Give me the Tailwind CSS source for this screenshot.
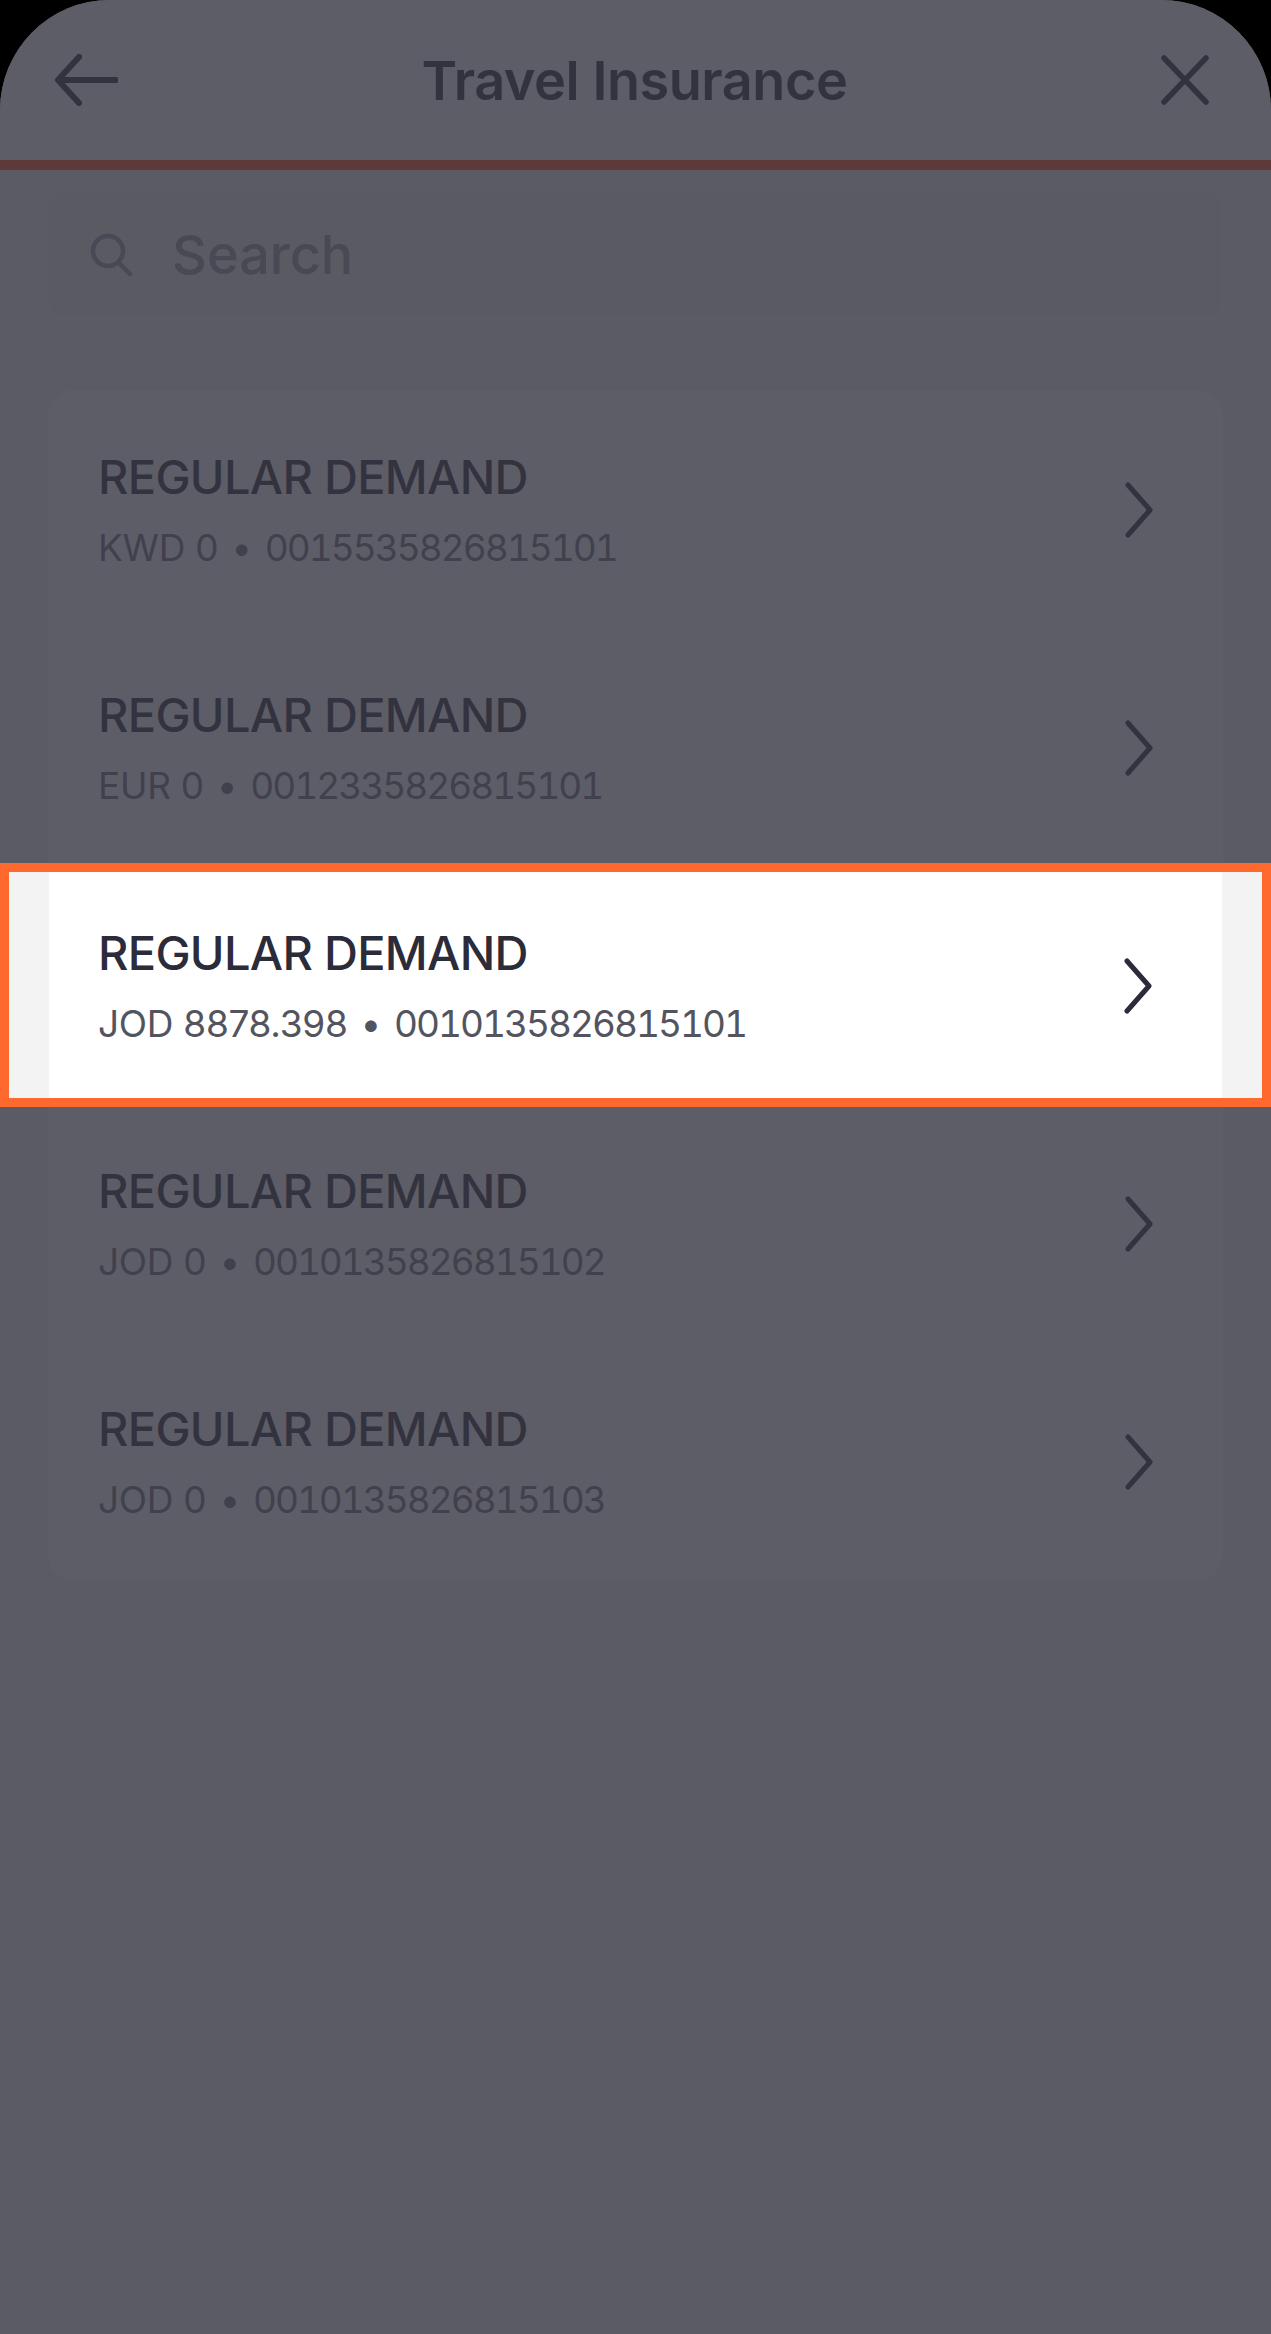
<!DOCTYPE html>
<html>
<head>
<meta charset="utf-8">
<script src="https://cdn.jsdelivr.net/npm/@tailwindcss/browser@4"></script>
</head>
<body class="m-0 bg-black">
<div class="w-[1271px] h-[2334px] bg-black overflow-hidden font-['Inter',sans-serif]">
  <div class="h-full rounded-t-[110px] bg-[#5b5b65] flex flex-col overflow-hidden">
    <header class="relative h-[160px] shrink-0 flex items-center justify-between pl-[54px] pr-[62px] bg-[#5d5d67]">
      <svg class="w-[64px] h-[54px]" viewBox="0 0 64 54" fill="none" stroke="#333340" stroke-width="6" stroke-linecap="round" stroke-linejoin="round"><path d="M62 27H4M25 4 4 27l21 23"/></svg>
      <h1 class="absolute inset-x-0 pt-[2px] pr-[2px] text-center text-[54px] leading-none font-semibold text-[#333340] tracking-[-0.45px]">Travel Insurance</h1>
      <svg class="w-[48px] h-[50px]" viewBox="0 0 48 50" fill="none" stroke="#333340" stroke-width="5.5" stroke-linecap="round"><path d="M3 3l42 44M45 3 3 47"/></svg>
    </header>
    <div class="h-[10px] shrink-0 bg-[#5d3a38]"></div>
    <div class="mt-[23px] mx-[50px] h-[122px] rounded-[14px] bg-[#5a5a63] flex items-center pl-[39px]">
      <svg class="w-[44px] h-[44px]" viewBox="0 0 44 44" fill="none" stroke="#494955" stroke-width="4.5" stroke-linecap="round"><circle cx="19" cy="19" r="15"/><path d="M30 31l11 11"/></svg>
      <span class="ml-[39px] pt-[2px] text-[54px] leading-none font-medium text-[#494955]">Search</span>
    </div>
    <div class="mt-[75px] flex flex-col">
      <div class="mx-[48px] h-[238px] rounded-t-[24px] bg-[#5d5d67] flex items-center justify-between pl-[50px] pr-[70px]">
        <div class="flex flex-col"><span class="text-[47px] leading-[56px] font-medium tracking-[-0.7px] text-[#333340]">REGULAR DEMAND</span><span class="mt-[21px] flex gap-[13px] text-[37px] leading-[44px] tracking-[-0.3px] text-[#41414d]"><span>KWD 0</span><span>•</span><span class="tabular-nums tracking-[-2px]">0015535826815101</span></span></div>
        <svg class="w-[28px] h-[56px] mt-[2px]" viewBox="0 0 28 56" fill="none" stroke="#333340" stroke-width="5" stroke-linecap="round" stroke-linejoin="round"><path d="M3 3l22 25L3 53"/></svg>
      </div>
      <div class="mx-[48px] h-[238px] bg-[#5d5d67] flex items-center justify-between pl-[50px] pr-[70px]">
        <div class="flex flex-col"><span class="text-[47px] leading-[56px] font-medium tracking-[-0.7px] text-[#333340]">REGULAR DEMAND</span><span class="mt-[21px] flex gap-[13px] text-[37px] leading-[44px] tracking-[-0.3px] text-[#41414d]"><span>EUR 0</span><span>•</span><span class="tabular-nums tracking-[-2px]">0012335826815101</span></span></div>
        <svg class="w-[28px] h-[56px] mt-[2px]" viewBox="0 0 28 56" fill="none" stroke="#333340" stroke-width="5" stroke-linecap="round" stroke-linejoin="round"><path d="M3 3l22 25L3 53"/></svg>
      </div>
      <div class="relative z-10 -my-[3px] h-[244px] border-[9px] border-[#ff692d] bg-[#f3f3f4] px-[40px] flex">
        <div class="flex-1 bg-white flex items-center justify-between pl-[49px] pr-[70px]">
          <div class="flex flex-col"><span class="text-[47px] leading-[56px] font-medium tracking-[-0.7px] text-[#2b2b3a]">REGULAR DEMAND</span><span class="mt-[21px] flex gap-[13px] text-[37px] leading-[44px] tracking-[-0.3px] text-[#54545f]"><span>JOD 8878.398</span><span>•</span><span class="tabular-nums tracking-[-2px]">0010135826815101</span></span></div>
          <svg class="w-[28px] h-[56px] mt-[2px]" viewBox="0 0 28 56" fill="none" stroke="#2b2b3a" stroke-width="5" stroke-linecap="round" stroke-linejoin="round"><path d="M3 3l22 25L3 53"/></svg>
        </div>
      </div>
      <div class="mx-[48px] h-[238px] bg-[#5d5d67] flex items-center justify-between pl-[50px] pr-[70px]">
        <div class="flex flex-col"><span class="text-[47px] leading-[56px] font-medium tracking-[-0.7px] text-[#333340]">REGULAR DEMAND</span><span class="mt-[21px] flex gap-[13px] text-[37px] leading-[44px] tracking-[-0.3px] text-[#41414d]"><span>JOD 0</span><span>•</span><span class="tabular-nums tracking-[-2px]">0010135826815102</span></span></div>
        <svg class="w-[28px] h-[56px] mt-[2px]" viewBox="0 0 28 56" fill="none" stroke="#333340" stroke-width="5" stroke-linecap="round" stroke-linejoin="round"><path d="M3 3l22 25L3 53"/></svg>
      </div>
      <div class="mx-[48px] h-[238px] rounded-b-[24px] bg-[#5d5d67] flex items-center justify-between pl-[50px] pr-[70px]">
        <div class="flex flex-col"><span class="text-[47px] leading-[56px] font-medium tracking-[-0.7px] text-[#333340]">REGULAR DEMAND</span><span class="mt-[21px] flex gap-[13px] text-[37px] leading-[44px] tracking-[-0.3px] text-[#41414d]"><span>JOD 0</span><span>•</span><span class="tabular-nums tracking-[-2px]">0010135826815103</span></span></div>
        <svg class="w-[28px] h-[56px] mt-[2px]" viewBox="0 0 28 56" fill="none" stroke="#333340" stroke-width="5" stroke-linecap="round" stroke-linejoin="round"><path d="M3 3l22 25L3 53"/></svg>
      </div>
    </div>
  </div>
</div>
</body>
</html>
